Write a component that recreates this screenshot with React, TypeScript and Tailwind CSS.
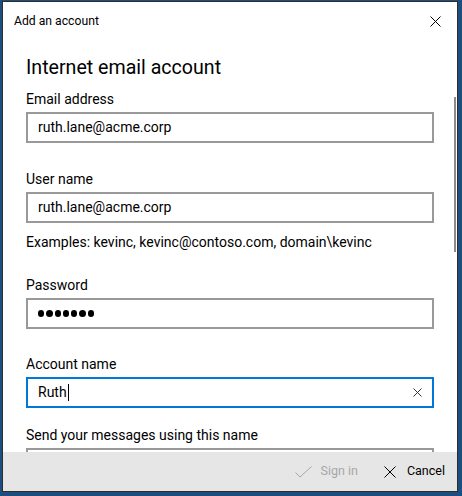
import React from "react";

const font = { fontFamily: 'Roboto, "Noto Sans", sans-serif' };

function XIcon({ size, stroke = "#000", sw = 1 }: { size: number; stroke?: string; sw?: number }) {
  return (
    <svg width={size} height={size} viewBox={`0 0 ${size} ${size}`} className="block">
      <path d={`M0.5 0.5 L${size - 0.5} ${size - 0.5} M${size - 0.5} 0.5 L0.5 ${size - 0.5}`} stroke={stroke} strokeWidth={sw} fill="none" />
    </svg>
  );
}

function Field({ value }: { value: string }) {
  return (
    <div className="mt-[3px] h-[31px] w-[408px] border-2 border-[#999999] bg-white flex items-center pl-[10px] text-[14px] text-black">
      {value}
    </div>
  );
}

const label = "text-[14px] leading-[20px] text-black";

export default function App() {
  return (
    <div className="w-[462px] h-[496px] bg-[#1c4e80] pl-[2px] pt-[1px] overflow-hidden" style={font}>
      <div className="relative w-[456px] h-[491px] border border-[#2d2d2d] bg-white flex flex-col overflow-hidden">
        {/* header */}
        <div className="h-[39px] shrink-0 flex items-center justify-between pl-[11px] pr-[16px]">
          <span className="text-[12.2px] text-black leading-none">Add an account</span>
          <XIcon size={11} />
        </div>
        {/* content */}
        <div className="flex-1 overflow-hidden pl-[23px] pt-[13px]">
          <div className="text-[19.6px] leading-[28px] text-black">Internet email account</div>
          <div className={`mt-[7px] ${label}`}>Email address</div>
          <Field value="ruth.lane@acme.corp" />
          <div className={`mt-[26px] ${label}`}>User name</div>
          <Field value="ruth.lane@acme.corp" />
          <div className={`mt-[9px] ${label}`}>Examples: kevinc, kevinc@contoso.com, domain\kevinc</div>
          <div className={`mt-[23px] ${label}`}>Password</div>
          <div className="mt-[3px] h-[31px] w-[408px] border-2 border-[#999999] bg-white flex items-center pl-[10px] gap-[2px]">
            {[0, 1, 2, 3, 4, 5, 6].map((i) => (
              <span key={i} className="block w-[6.3px] h-[6.3px] rounded-full bg-black" />
            ))}
          </div>
          <div className={`mt-[25px] ${label}`}>Account name</div>
          <div className="mt-[3px] h-[31px] w-[408px] border-2 border-[#0078d7] bg-white flex items-center justify-between pl-[10px] pr-[10px] text-[14px] text-black">
            <span className="flex items-center">
              Ruth
              <span className="block w-[1px] h-[17px] bg-black ml-[1px]" />
            </span>
            <XIcon size={9} stroke="#333" />
          </div>
          <div className={`mt-[17px] ${label}`}>Send your messages using this name</div>
          <div className="mt-[3px] h-[31px] w-[408px] border-2 border-[#999999] bg-white" />
        </div>
        {/* scrollbar */}
        <div className="absolute left-[451px] top-[95px] w-[2px] h-[155px] bg-[#8c8c8c]" />
        {/* footer */}
        <div className="h-[39px] shrink-0 bg-[#e6e6e6] flex items-center justify-end pr-[12px] text-[12.5px]">
          <div className="flex items-center gap-[9px] text-[#a6a6a6]">
            <svg width="17" height="12" viewBox="0 0 17 12" className="block">
              <path d="M0.5 6.5 L5 11 L16.5 0.5" stroke="#a6a6a6" strokeWidth="1" fill="none" />
            </svg>
            <span>Sign in</span>
          </div>
          <div className="flex items-center gap-[11px] ml-[26px] text-black">
            <XIcon size={12} />
            <span>Cancel</span>
          </div>
        </div>
      </div>
    </div>
  );
}
